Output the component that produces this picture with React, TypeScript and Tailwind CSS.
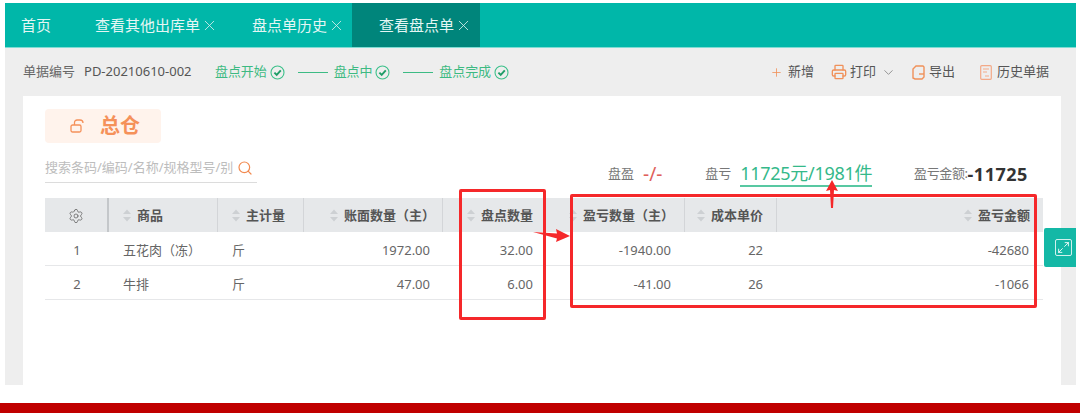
import React from 'react';
import { Plus, Printer, ChevronDown, Settings, X, Search, Maximize2 } from 'lucide-react';

// Small green check used in the progress steps
const StepCheck = () => (
  <svg width="15" height="15" viewBox="0 0 15 15" fill="none" className="ml-[3px] shrink-0">
    <circle cx="7.5" cy="7.5" r="6.5" stroke="#3cc08a" strokeWidth="1.1" />
    <path d="M4.4 7.6 6.7 9.9 10.8 5.4" stroke="#1f9d68" strokeWidth="1.9" />
  </svg>
);

const Step: React.FC<{ label: string; line?: boolean }> = ({ label, line }) => (
  <div className="flex items-center">
    <span className="text-[13px] text-[#3dba82] tracking-[-0.1px]">{label}</span>
    <StepCheck />
    {line && <div className="w-[30px] h-px bg-[#3cbb84] ml-[13px] mr-[6px]" />}
  </div>
);

// Sort arrows in the table header
const SortIcon = () => (
  <svg width="8" height="13" viewBox="0 0 8 13" className="shrink-0 mr-[6px]">
    <path d="M4 0.5 8 5H0Z" fill="#cdd0d3" />
    <path d="M4 12.5 0 8h8Z" fill="#cdd0d3" />
  </svg>
);

const columns = [
  'w-[64px] justify-center',
  'w-[109px] pl-[14px]',
  'w-[86px] pl-[14px]',
  'w-[139px] justify-end',
  'w-[103px] justify-end',
  'w-[139px] justify-end',
  'w-[92px] justify-end',
  'w-[266px] justify-end',
];

const headerPad = ['', '', '', 'pr-[7px]', 'pr-[12px]', 'pr-[10px]', 'pr-[13px]', 'pr-[13px]'];
const cellPad = ['', '', '', 'pr-[13px]', 'pr-[13px]', 'pr-[14px]', 'pr-[14px]', 'pr-[14px]'];

const headers = ['', '商品', '主计量', '账面数量（主）', '盘点数量', '盈亏数量（主）', '成本单价', '盈亏金额'];

const rows = [
  ['1', '五花肉（冻）', '斤', '1972.00', '32.00', '-1940.00', '22', '-42680'],
  ['2', '牛排', '斤', '47.00', '6.00', '-41.00', '26', '-1066'],
];

const Tab: React.FC<{ label: string; active?: boolean; className?: string }> = ({ label, active, className = '' }) => (
  <div className={`h-full flex items-center text-[15px] text-[#e4f6f4] ${active ? 'bg-[#00857b]' : ''} ${className}`}>
    <span>{label}</span>
    <X size={17} strokeWidth={1.2} className="ml-[1px] text-[#d5efec]" />
  </div>
);

const Table = () => (
  <div className="mt-[15px] w-[998px]">
    <div className="flex h-[34px] bg-[#e6e8ea]">
      {headers.map((h, i) => (
        <div
          key={i}
          className={`flex items-center pt-[1px] text-[13px] font-bold text-[#555] ${columns[i]} ${headerPad[i]} ${i === 0 ? 'border-r-2 border-[#c4c7ca]' : i < 7 ? 'border-r border-[#d3d5d8]' : ''}`}
        >
          {i === 0 ? (
            <Settings size={16} strokeWidth={1.2} className="text-[#666]" />
          ) : (
            <>
              <SortIcon />
              {h}
            </>
          )}
        </div>
      ))}
    </div>
    {rows.map((r) => (
      <div key={r[0]} className="flex h-[34px] border-b border-[#e6e7e9]">
        {r.map((c, i) => (
          <div key={i} className={`flex items-center pt-[4px] text-[13px] text-[#666] ${columns[i]} ${cellPad[i]}`}>
            {c}
          </div>
        ))}
      </div>
    ))}
  </div>
);

export default function App() {
  return (
    <div
      className="relative w-[1080px] h-[413px] overflow-hidden bg-white flex flex-col"
      style={{ fontFamily: '"Noto Sans", "Noto Sans CJK SC", sans-serif' }}
    >
      <div className="pt-[3px] pl-[5px] pr-[4px] h-[385px] flex flex-col">
        {/* Tabs */}
        <div className="h-[45px] bg-[#00b7a9] flex items-center border-b border-[#7fdcd3] shrink-0">
          <div className="pl-[16px] w-[90px] text-[15px] text-[#e4f6f4]">首页</div>
          <Tab label="查看其他出库单" className="w-[157px]" />
          <Tab label="盘点单历史" className="w-[100px]" />
          <Tab label="查看盘点单" active className="w-[128px] pl-[27px]" />
        </div>

        <div className="flex-1 bg-[#eeeeee] flex flex-col min-h-0">
          {/* Order no. and actions */}
          <div className="h-[48px] shrink-0 flex items-center pl-[18px] pr-[27px]">
            <span className="text-[13px] text-[#666]">单据编号</span>
            <span className="ml-[9px] text-[13px] text-[#555] w-[131px]">PD-20210610-002</span>
            <Step label="盘点开始" line />
            <Step label="盘点中" line />
            <Step label="盘点完成" />
            <div className="ml-auto flex items-center text-[13px] text-[#555]">
              <Plus size={13} strokeWidth={1.5} className="text-[#f0915a]" />
              <span className="ml-[5px]">新增</span>
              <Printer size={16} strokeWidth={2} className="ml-[17px] text-[#f0915a]" />
              <span className="ml-[3px]">打印</span>
              <ChevronDown size={15} strokeWidth={1.2} className="ml-[5px] text-[#777]" />
              <svg width="13" height="15" viewBox="0 0 13 15" fill="none" className="ml-[16px]">
                <path d="M4 1h7l1 1v10l-2 2H3l-2-1V4z" stroke="#f0915a" strokeWidth="1.4" />
                <path d="M7 9h5" stroke="#f0915a" strokeWidth="1.4" />
              </svg>
              <span className="ml-[4px]">导出</span>
              <svg width="12" height="15" viewBox="0 0 12 15" fill="none" className="ml-[25px]">
                <rect x="0.7" y="0.7" width="10.6" height="13.6" rx="1" stroke="#f3a987" strokeWidth="1.2" />
                <path d="M3 4h6M3 7h4M5 11h4" stroke="#f3a987" strokeWidth="1.2" />
              </svg>
              <span className="ml-[5px]">历史单据</span>
            </div>
          </div>

          {/* Panel */}
          <div className="flex-1 ml-[18px] mr-[15px] bg-white pl-[22px] pt-[13px]">
            <div className="w-[116px] h-[34px] bg-[#fff3ec] rounded-[4px] flex items-center pl-[25px]">
              <svg width="15" height="14" viewBox="0 0 15 14" fill="none">
                <rect x="1" y="6" width="10" height="7" rx="1.5" stroke="#f5915a" strokeWidth="1.3" />
                <path d="M4.5 6V3.5a2.5 2.5 0 0 1 2.5-2.5h3a3 3 0 0 1 3 3" stroke="#f5915a" strokeWidth="1.3" />
              </svg>
              <span className="ml-[15px] text-[20px] font-bold text-[#f5915a] leading-none">总仓</span>
            </div>

            <div className="flex items-end mt-[13px] h-[27px]">
              <div className="w-[212px] h-[27px] border-b border-[#dcdcdc] flex items-center justify-between pr-[4px] pb-[3px]">
                <span className="text-[13px] text-[#bdbdbd] whitespace-nowrap">搜索条码/编码/名称/规格型号/别</span>
                <Search size={16} strokeWidth={1.8} className="text-[#f28a50] shrink-0" />
              </div>
              <div className="ml-[351px] mb-[-5px] flex items-center h-[28px] text-[13px] text-[#777]">
                <span>盘盈</span>
                <span className="ml-[9px] text-[19px] text-[#e0605a]">-/-</span>
                <span className="ml-[43px]">盘亏</span>
                <span className="ml-[9px] text-[18px] text-[#35b98a] border-b-2 border-[#58c8a2] leading-[23px] tracking-[-0.3px]">11725元/1981件</span>
                <span className="ml-[42px] tracking-[-0.4px]">盈亏金额:</span>
                <span className="text-[18px] font-bold text-[#333] tracking-[0.5px]">-11725</span>
              </div>
            </div>

            <Table />
          </div>
        </div>
      </div>

      <div className="mt-[18px] h-[10px] bg-[#c00000] shrink-0" />

      {/* Expand button on the panel edge */}
      <div className="absolute left-[1044px] top-[228px] w-[32px] h-[39px] bg-[#14b8a6] rounded-l-[2px] flex items-center justify-end pr-[4px]">
        <div className="w-[17px] h-[17px] border border-white/80 rounded-[2px] flex items-center justify-center">
          <Maximize2 size={13} strokeWidth={1.6} className="text-white" />
        </div>
      </div>

      {/* Red annotations drawn over the screenshot */}
      <div className="absolute left-[459px] top-[189px] w-[87px] h-[131px] border-[3px] border-[#f5282a] rounded-[2px]" />
      <div className="absolute left-[570px] top-[194px] w-[467px] h-[114px] border-[3px] border-[#f5282a] rounded-[2px]" />
      <svg width="38" height="16" viewBox="0 0 38 16" className="absolute left-[533px] top-[228px]">
        <path d="M0 4 24 5.5 23 1 37 8 23 14 24 10.5Z" fill="#f5282a" />
      </svg>
      <svg width="14" height="30" viewBox="0 0 14 30" className="absolute left-[825px] top-[179px]">
        <path d="M7 1 13 12 9 11 8 29 6 29 5 11 1 12Z" fill="#f5282a" />
      </svg>
    </div>
  );
}
